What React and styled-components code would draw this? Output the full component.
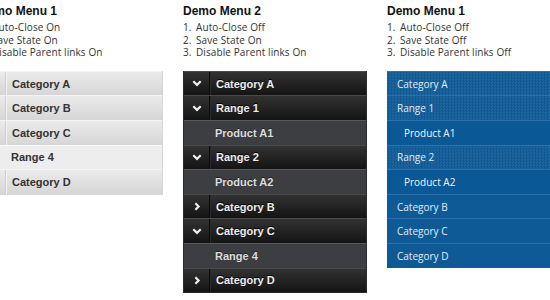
import React from 'react';
import styled, { createGlobalStyle, css } from 'styled-components';

const Global = createGlobalStyle`
  body {
    margin: 0;
    background: #fff;
    font-family: "Liberation Sans", Arial, sans-serif;
    overflow: hidden;
  }
`;

const Page = styled.div`
  display: flex;
  gap: 20px;
  margin-left: -21px;
  padding-top: 4px;
`;

const Column = styled.div`
  width: 184px;
  flex: none;
`;

const Title = styled.h3`
  margin: 0;
  font: bold 12px "Liberation Sans", Arial, sans-serif;
  color: #111;
  line-height: 14px;
`;

const Options = styled.ol`
  margin: 3px 0 0;
  padding: 0;
  list-style: none;
  counter-reset: opt;
  li {
    counter-increment: opt;
    font: 10px "Open Sans", sans-serif;
    letter-spacing: 0.1px;
    color: #333;
    line-height: 12.6px;
    display: flex;
  }
  li::before {
    content: counter(opt) ".";
    width: 13px;
  }
`;

const Menu = styled.ul`
  list-style: none;
  margin: 12px 0 0;
  padding: 0;
  ${({ $skin }) => $skin === 'grey' && css`border: 1px solid #d6d6d6; border-top: 0;`}
  ${({ $skin }) => $skin === 'black' && css`border: 1px solid #2a2a2a; border-top: 0;`}
`;

const themes = {
  grey: {
    parent: css`
      background: linear-gradient(#ebebeb, #d6d6d6);
      border-top: 1px solid #f4f4f4;
      color: #333;
      font: bold 11px "Liberation Sans", Arial, sans-serif;
    `,
    child: css`
      background: #ededed;
      border-top: 1px solid #fafafa;
      color: #333;
      font: bold 11px "Liberation Sans", Arial, sans-serif;
    `,
  },
  black: {
    parent: css`
      background: linear-gradient(#323232, #141414);
      border-top: 1px solid #4a4a4a;
      color: #eee;
      font: bold 11px "Liberation Sans", Arial, sans-serif;
      text-shadow: 0 -1px 0 #000;
    `,
    child: css`
      background: #3d3e41;
      border-top: 1px solid #58595c;
      color: #ddd;
      font: bold 11px "Liberation Sans", Arial, sans-serif;
      text-shadow: 0 -1px 0 #222;
    `,
  },
  blue: {
    parent: css`
      background-color: #0e5a97;
      border-top: 1px solid #2b70ad;
      color: #e3eaf3;
      font: 10px "Open Sans", sans-serif;
    `,
    child: css`
      background-color: #0b5896;
      border-top: 1px solid #2b70ad;
      color: #f0f4f8;
      font: 10px "Open Sans", sans-serif;
    `,
  },
};

const Row = styled.li`
  display: flex;
  align-items: center;
  height: 24.6px;
  box-sizing: border-box;
  ${({ $skin, $child }) => themes[$skin][$child ? 'child' : 'parent']}
  ${({ $skin, $open }) =>
    $skin === 'blue' &&
    $open &&
    css`
      background-color: #1a63a0;
      background-image: repeating-conic-gradient(#12598f 0 25%, #1c66a3 0 50%);
      background-size: 3px 3px;
    `}
`;

const IconCell = styled.span`
  width: 25px;
  align-self: stretch;
  flex: none;
  display: flex;
  align-items: center;
  justify-content: center;
  ${({ $skin, $child }) =>
    !$child && $skin === 'black' && css`border-right: 1px solid #0c0c0c; box-shadow: 1px 0 0 #2a2a2a;`}
  ${({ $skin, $child }) =>
    !$child && $skin === 'grey' && css`border-right: 1px solid #cfcfcf; box-shadow: 1px 0 0 #f2f2f2;`}
`;

const Label = styled.span`
  padding-left: ${({ $pad }) => $pad}px;
`;

const Chevron = ({ dir }) => (
  <svg width="10" height="9" viewBox="0 0 10 9">
    {dir === 'down' ? (
      <path d="M1.3 2.3 L5 5.9 L8.7 2.3" fill="none" stroke="#eee" strokeWidth="2.2" />
    ) : (
      <path d="M3.4 1.3 L6.6 4.5 L3.4 7.7" fill="none" stroke="#eee" strokeWidth="2.2" />
    )}
  </svg>
);

const menus = [
  {
    title: 'Demo Menu 1',
    opts: ['Auto-Close On', 'Save State On', 'Disable Parent links On'],
    skin: 'grey',
    rows: [
      { t: 'Category A' },
      { t: 'Category B' },
      { t: 'Category C' },
      { t: 'Range 4', child: true },
      { t: 'Category D' },
    ],
  },
  {
    title: 'Demo Menu 2',
    opts: ['Auto-Close Off', 'Save State On', 'Disable Parent links On'],
    skin: 'black',
    rows: [
      { t: 'Category A', icon: 'down' },
      { t: 'Range 1', icon: 'down' },
      { t: 'Product A1', child: true },
      { t: 'Range 2', icon: 'down' },
      { t: 'Product A2', child: true },
      { t: 'Category B', icon: 'right' },
      { t: 'Category C', icon: 'down' },
      { t: 'Range 4', child: true },
      { t: 'Category D', icon: 'right' },
    ],
  },
  {
    title: 'Demo Menu 1',
    opts: ['Auto-Close Off', 'Save State Off', 'Disable Parent links Off'],
    skin: 'blue',
    rows: [
      { t: 'Category A', open: true },
      { t: 'Range 1', open: true },
      { t: 'Product A1', child: true },
      { t: 'Range 2', open: true },
      { t: 'Product A2', child: true },
      { t: 'Category B' },
      { t: 'Category C' },
      { t: 'Category D' },
    ],
  },
];

export default function App() {
  return (
    <>
      <Global />
      <Page>
        {menus.map((m, i) => (
          <Column key={i}>
            <Title>{m.title}</Title>
            <Options>
              {m.opts.map((o) => (
                <li key={o}>{o}</li>
              ))}
            </Options>
            <Menu $skin={m.skin}>
              {m.rows.map((r, j) => (
                <Row key={j} $skin={m.skin} $child={r.child} $open={r.open}>
                  {m.skin !== 'blue' && (
                    <IconCell $skin={m.skin} $child={r.child}>
                      {r.icon && <Chevron dir={r.icon} />}
                    </IconCell>
                  )}
                  <Label $pad={m.skin === 'blue' ? (r.child ? 17 : 10) : 6}>{r.t}</Label>
                </Row>
              ))}
            </Menu>
          </Column>
        ))}
      </Page>
    </>
  );
}
